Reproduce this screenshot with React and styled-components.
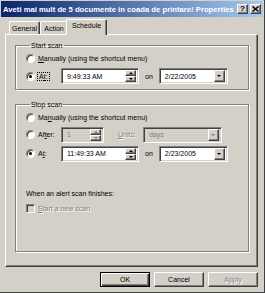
import React from 'react';
import styled, { createGlobalStyle, css } from 'styled-components';

const GlobalStyle = createGlobalStyle`
  html, body { margin: 0; padding: 0; background: #d4d0c8; }
  body {
    font-family: "Liberation Sans", Arial, sans-serif;
    font-size: 7px;
    color: #000;
  }
`;

const raised = css`
  border: 1px solid;
  border-color: #fff #404040 #404040 #fff;
  box-shadow: inset -1px -1px 0 #808080;
`;

const sunken = css`
  border: 1px solid;
  border-color: #808080 #fff #fff #808080;
  box-shadow: inset 1px 1px 0 #404040, inset -1px -1px 0 #d4d0c8;
`;

const Window = styled.div`
  box-sizing: border-box;
  width: 265px;
  height: 293px;
  background: #d4d0c8;
  border-right: 1px solid #404040;
  border-bottom: 1px solid #404040;
  padding: 1px 1px 0 1px;
  display: flex;
  flex-direction: column;
`;

const TitleBar = styled.div`
  height: 16px;
  display: flex;
  align-items: center;
  padding: 0 2px 0 2px;
  background: linear-gradient(to right, #0a246a, #a6caf0);
  color: #fff;
  font-weight: bold;
  font-size: 7.7px;
  white-space: nowrap;
`;

const TitleText = styled.span`
  flex: 1;
  overflow: hidden;
`;

const TitleButton = styled.button`
  box-sizing: border-box;
  width: 11px;
  height: 10px;
  margin-left: ${p => p.$gap || 0}px;
  padding: 0;
  background: #d4d0c8;
  ${raised};
  display: flex;
  align-items: center;
  justify-content: center;
  font-family: "Liberation Sans", Arial, sans-serif;
  font-weight: bold;
  font-size: 8px;
  line-height: 1;
  color: #000;
`;

const Body = styled.div`
  flex: 1;
  display: flex;
  flex-direction: column;
  padding: 2px 5px 0 4px;
`;

const TabStrip = styled.div`
  height: 15px;
  display: flex;
  align-items: flex-end;
  padding-left: 4px;
  position: relative;
  z-index: 1;
`;

const Tab = styled.div`
  box-sizing: border-box;
  height: ${p => (p.$active ? 16 : 13)}px;
  width: ${p => p.$w}px;
  margin: 0 ${p => (p.$active ? -2 : 0)}px ${p => (p.$active ? -1 : 0)}px;
  background: #d4d0c8;
  border-top: 1px solid #fff;
  border-left: 1px solid #fff;
  border-right: 1px solid #404040;
  border-radius: 2px 2px 0 0;
  box-shadow: inset -1px 0 0 #808080;
  display: flex;
  align-items: ${p => (p.$active ? 'flex-start' : 'center')};
  padding-top: ${p => (p.$active ? 2 : 0)}px;
  justify-content: center;
  ${p => p.$active && 'z-index: 2;'}
`;

const Panel = styled.div`
  box-sizing: border-box;
  height: 233px;
  border: 1px solid;
  border-color: #fff #404040 #404040 #fff;
  box-shadow: inset -1px -1px 0 #808080;
  padding: 3px 8px 0 9px;
  display: flex;
  flex-direction: column;
`;

const Group = styled.fieldset`
  margin: ${p => p.$top}px 0 0 0;
  padding: 0 0 ${p => p.$bottom}px 10px;
  border: 1px solid #808080;
  box-shadow: inset 1px 1px 0 #fff, 1px 1px 0 #fff;
  min-height: ${p => p.$min || 0}px;
  box-sizing: border-box;
`;

const Legend = styled.legend`
  margin-left: 4px;
  padding: 0 1px;
  line-height: 9px;
`;

const Row = styled.div`
  height: ${p => p.$h || 18}px;
  display: flex;
  align-items: center;
`;

const Choice = styled.label`
  display: flex;
  align-items: center;
  flex: ${p => (p.$wide ? '1' : '0 0 35px')};
`;

const Radio = styled.span`
  box-sizing: border-box;
  width: 9px;
  height: 9px;
  border-radius: 50%;
  border: 1px solid;
  border-color: #808080 #fff #fff #808080;
  background: #fff;
  box-shadow: inset 1px 1px 0 #404040;
  display: flex;
  align-items: center;
  justify-content: center;
  margin-right: 3px;
  &::after {
    content: '';
    width: 3px;
    height: 3px;
    border-radius: 50%;
    background: ${p => (p.$checked ? '#000' : 'transparent')};
  }
`;

const Check = styled.span`
  box-sizing: border-box;
  width: 9px;
  height: 9px;
  ${sunken};
  background: #d4d0c8;
  margin-right: 3px;
`;

const Focus = styled.span`
  outline: 1px dotted #000;
  padding: 0 1px;
`;

const Text = styled.span`
  color: ${p => (p.$disabled ? '#808080' : '#000')};
  ${p => p.$disabled && 'text-shadow: 1px 1px 0 #fff;'}
  white-space: nowrap;
`;

const Field = styled.div`
  box-sizing: border-box;
  width: ${p => p.$w}px;
  height: 16px;
  ${sunken};
  background: ${p => (p.$disabled ? '#d4d0c8' : '#fff')};
  color: ${p => (p.$disabled ? '#808080' : '#000')};
  display: flex;
  align-items: center;
  padding: 2px 2px 2px 5px;
`;

const FieldValue = styled.span`
  flex: 1;
  white-space: nowrap;
`;

const Spin = styled.div`
  width: 11px;
  height: 12px;
  display: flex;
  flex-direction: column;
`;

const SpinBtn = styled.div`
  box-sizing: border-box;
  flex: 1;
  ${raised};
  background: #d4d0c8;
  display: flex;
  align-items: center;
  justify-content: center;
`;

const DropBtn = styled.div`
  box-sizing: border-box;
  width: 11px;
  height: 12px;
  ${raised};
  background: #d4d0c8;
  display: flex;
  align-items: center;
  justify-content: center;
`;

const Arrow = styled.span`
  width: 0;
  height: 0;
  border-left: ${p => p.$s}px solid transparent;
  border-right: ${p => p.$s}px solid transparent;
  ${p => (p.$up ? 'border-bottom' : 'border-top')}: ${p => p.$s}px solid ${p => (p.$disabled ? '#808080' : '#000')};
`;

const On = styled.span`
  margin: 0 6px;
`;

const Units = styled.span`
  margin: 0 7px 0 14px;
  color: #808080;
  text-shadow: 1px 1px 0 #fff;
`;

const Caption = styled.div`
  margin-top: ${p => p.$top}px;
  height: 12px;
  display: flex;
  align-items: center;
`;

const ButtonRow = styled.div`
  display: flex;
  justify-content: flex-end;
  gap: 4px;
  margin-top: 5px;
`;

const Button = styled.button`
  box-sizing: border-box;
  width: 50px;
  height: 15px;
  padding: 0;
  background: #d4d0c8;
  font-family: "Liberation Sans", Arial, sans-serif;
  font-size: 7px;
  color: ${p => (p.$disabled ? '#808080' : '#000')};
  ${p => p.$disabled && 'text-shadow: 1px 1px 0 #fff;'}
  ${p =>
    p.$default
      ? css`
          border: 1px solid #000;
          box-shadow: inset 1px 1px 0 #fff, inset -1px -1px 0 #404040, inset -2px -2px 0 #808080;
        `
      : raised};
`;

const Key = styled.u`
  text-decoration: underline;
`;

function Spinner({ disabled }) {
  return (
    <Spin>
      <SpinBtn><Arrow $up $s={2} $disabled={disabled} /></SpinBtn>
      <SpinBtn><Arrow $s={2} $disabled={disabled} /></SpinBtn>
    </Spin>
  );
}

function Combo({ value, w, disabled }) {
  return (
    <Field $w={w} $disabled={disabled}>
      <FieldValue>{value}</FieldValue>
      <DropBtn><Arrow $s={2.5} $disabled={disabled} /></DropBtn>
    </Field>
  );
}

function TimeBox({ value, w, disabled }) {
  return (
    <Field $w={w} $disabled={disabled}>
      <FieldValue>{value}</FieldValue>
      <Spinner disabled={disabled} />
    </Field>
  );
}

export default function App() {
  return (
    <>
      <GlobalStyle />
      <Window>
        <TitleBar>
          <TitleText>Aveti mai mult de 5 documente in coada de printare! Properties</TitleText>
          <TitleButton>?</TitleButton>
          <TitleButton $gap={2}>
            <svg width="7" height="6" viewBox="0 0 7 6">
              <path d="M0.5 0.5 L6.5 5.5 M6.5 0.5 L0.5 5.5" stroke="#000" strokeWidth="1.4" />
            </svg>
          </TitleButton>
        </TitleBar>

        <Body>
          <TabStrip>
            <Tab $w={31}>General</Tab>
            <Tab $w={28}>Action</Tab>
            <Tab $w={41} $active>Schedule</Tab>
          </TabStrip>

          <Panel>
            <Group $top={3} $bottom={3}>
              <Legend>Start scan</Legend>
              <Row $h={16}>
                <Choice $wide><Radio /><Text><Key>M</Key>anually (using the shortcut menu)</Text></Choice>
              </Row>
              <Row $h={20}>
                <Choice><Radio $checked /><Focus>A<Key>t</Key>:</Focus></Choice>
                <TimeBox value="9:49:33 AM" w={78} />
                <On>on</On>
                <Combo value="2/22/2005" w={69} />
              </Row>
            </Group>

            <Group $top={10} $bottom={0} $min={152}>
              <Legend>Stop scan</Legend>
              <Row $h={16}>
                <Choice $wide><Radio /><Text>Ma<Key>n</Key>ually (using the shortcut menu)</Text></Choice>
              </Row>
              <Row $h={19}>
                <Choice><Radio /><Text>Af<Key>t</Key>er:</Text></Choice>
                <TimeBox value="1" w={43} disabled />
                <Units><Key>U</Key>nits:</Units>
                <Combo value="days" w={79} disabled />
              </Row>
              <Row $h={19}>
                <Choice><Radio $checked /><Text>A<Key>t</Key>:</Text></Choice>
                <TimeBox value="11:49:33 AM" w={78} />
                <On>on</On>
                <Combo value="2/23/2005" w={69} />
              </Row>
              <Caption $top={24}>When an alert scan finishes:</Caption>
              <Caption $top={3}>
                <Check />
                <Text $disabled><Key>S</Key>tart a new scan</Text>
              </Caption>
            </Group>
          </Panel>

          <ButtonRow>
            <Button $default>OK</Button>
            <Button>Cancel</Button>
            <Button $disabled>Apply</Button>
          </ButtonRow>
        </Body>
      </Window>
    </>
  );
}
